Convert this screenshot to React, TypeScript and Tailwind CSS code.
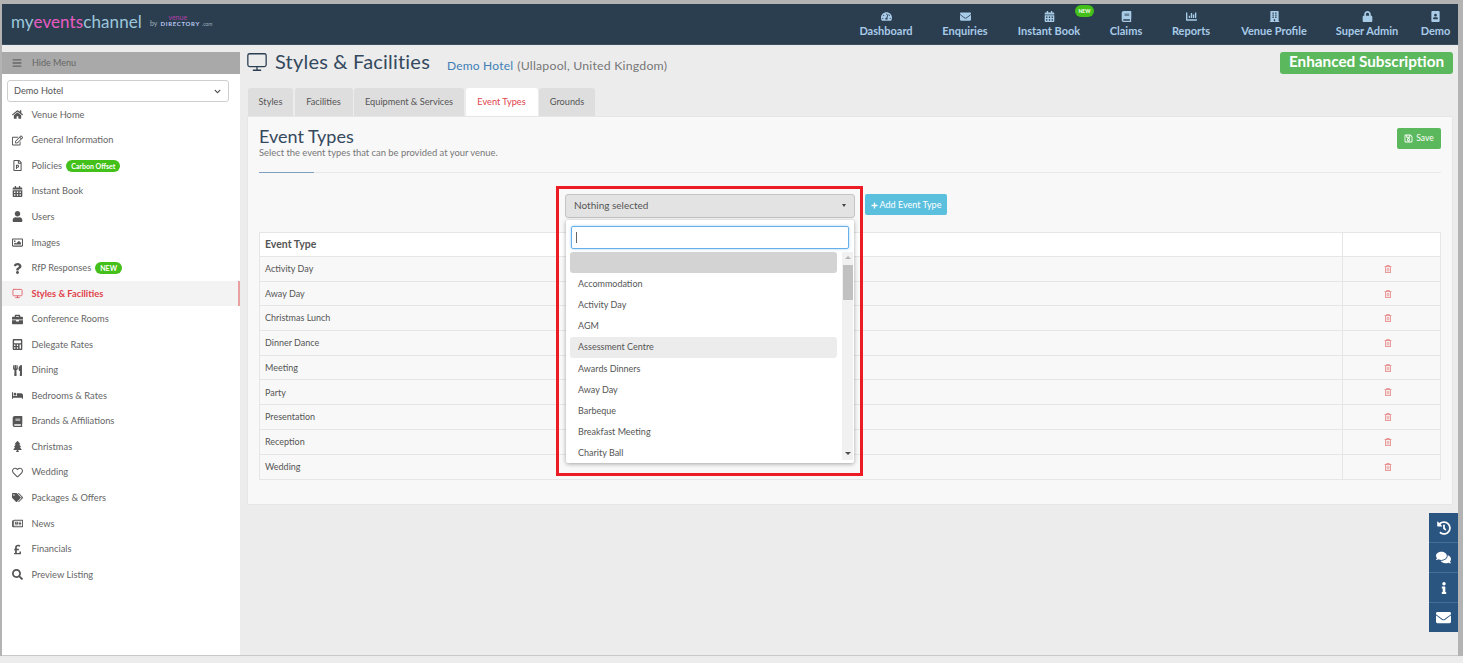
import { Monitor } from "lucide-react";
import {
  FaBars,
  FaBed,
  FaBook,
  FaBriefcase,
  FaBuilding,
  FaCalculator,
  FaCalendarAlt,
  FaChartBar,
  FaChevronDown,
  FaComments,
  FaEnvelope,
  FaHistory,
  FaHome,
  FaInfo,
  FaLock,
  FaPlus,
  FaPortrait,
  FaPoundSign,
  FaQuestion,
  FaRegEdit,
  FaRegFilePowerpoint,
  FaRegHeart,
  FaRegImage,
  FaRegNewspaper,
  FaRegSave,
  FaRegTrashAlt,
  FaSearch,
  FaTachometerAlt,
  FaTags,
  FaTree,
  FaUser,
  FaUtensils,
} from "react-icons/fa";

const navItems = [
  { label: "Dashboard", icon: FaTachometerAlt, width: "w-[86px]" },
  { label: "Enquiries", icon: FaEnvelope, width: "w-[72px]" },
  { label: "Instant Book", icon: FaCalendarAlt, width: "w-[96px]", isNew: true },
  { label: "Claims", icon: FaBook, width: "w-[58px]" },
  { label: "Reports", icon: FaChartBar, width: "w-[72px]" },
  { label: "Venue Profile", icon: FaBuilding, width: "w-[94px]" },
  { label: "Super Admin", icon: FaLock, width: "w-[92px]" },
  { label: "Demo", icon: FaPortrait, width: "w-[45px]" },
];

const menuItems = [
  { label: "Venue Home", icon: FaHome },
  { label: "General Information", icon: FaRegEdit },
  { label: "Policies", icon: FaRegFilePowerpoint, badge: "Carbon Offset" },
  { label: "Instant Book", icon: FaCalendarAlt },
  { label: "Users", icon: FaUser },
  { label: "Images", icon: FaRegImage },
  { label: "RfP Responses", icon: FaQuestion, badge: "NEW" },
  { label: "Styles & Facilities", icon: Monitor, active: true },
  { label: "Conference Rooms", icon: FaBriefcase },
  { label: "Delegate Rates", icon: FaCalculator },
  { label: "Dining", icon: FaUtensils },
  { label: "Bedrooms & Rates", icon: FaBed },
  { label: "Brands & Affiliations", icon: FaBook },
  { label: "Christmas", icon: FaTree },
  { label: "Wedding", icon: FaRegHeart },
  { label: "Packages & Offers", icon: FaTags },
  { label: "News", icon: FaRegNewspaper },
  { label: "Financials", icon: FaPoundSign },
  { label: "Preview Listing", icon: FaSearch },
];

const tabs = [
  { label: "Styles", width: "w-[45px]" },
  { label: "Facilities", width: "w-[58px]" },
  { label: "Equipment & Services", width: "w-[110px]" },
  { label: "Event Types", width: "w-[72px]", active: true },
  { label: "Grounds", width: "w-[56px]" },
];

const eventRows = [
  "Activity Day",
  "Away Day",
  "Christmas Lunch",
  "Dinner Dance",
  "Meeting",
  "Party",
  "Presentation",
  "Reception",
  "Wedding",
];

const options = [
  "Accommodation",
  "Activity Day",
  "AGM",
  "Assessment Centre",
  "Awards Dinners",
  "Away Day",
  "Barbeque",
  "Breakfast Meeting",
  "Charity Ball",
];

const Header = () => (
  <div className="h-[41px] shrink-0 bg-[#2b3e50] flex items-start justify-between border-b border-[#3c4f60] ml-[2px]">
    <div className="flex items-center pl-[9px] pt-[7px]">
      <span className="text-[17px] leading-[22px] tracking-[0.1px] text-[#9cc7dc]">
        my<span className="text-[#e85cc0]">events</span>channel
      </span>
      <span className="ml-[8px] mt-[3px] text-[7px] text-[#9fb0bd]">by</span>
      <div className="ml-[3px] flex flex-col items-start -mt-[2px]">
        <span className="text-[7px] leading-[6px] ml-[8px] text-[#b03fa8]">venue</span>
        <span className="text-[6px] leading-[8px] font-bold tracking-[0.7px] text-[#b9c6f0]">
          DIRECTORY <span className="font-normal text-[5px] text-[#9fb0bd] tracking-normal">.com</span>
        </span>
      </div>
    </div>
    <div className="flex">
      {navItems.map((item) => (
        <div
          key={item.label}
          className={`${item.width} relative flex flex-col items-center pt-[7px] text-[#a8cbe8]`}
        >
          <item.icon className="w-[11px] h-[11px] mb-[2px]" />
          <span className="text-[11px] leading-[14px] font-bold whitespace-nowrap">{item.label}</span>
          {item.isNew && (
            <span className="absolute top-[1px] right-[3px] w-[19px] h-[12px] rounded-full bg-[#43c01a] text-white text-[5px] font-bold leading-[12px] text-center">
              NEW
            </span>
          )}
        </div>
      ))}
    </div>
  </div>
);

const Sidebar = () => (
  <div className="w-[238px] shrink-0 bg-white mt-[7px] flex flex-col">
    <div className="h-[22px] bg-[#a9a9a9] flex items-center text-[#666] text-[9px]">
      <FaBars className="ml-[10px] w-[10px] h-[10px]" />
      <span className="ml-[10px]">Hide Menu</span>
    </div>
    <div className="ml-[5px] mr-[11px] mt-[6px] h-[22px] rounded-[3px] border border-[#cfcfcf] flex items-center justify-between pl-[6px] pr-[7px] text-[9.2px] text-[#555]">
      <span>Demo Hotel</span>
      <FaChevronDown className="w-[7px] h-[7px] text-[#444]" />
    </div>
    <div className="flex flex-col">
      {menuItems.map((item) => (
        <div
          key={item.label}
          className={`h-[25.55px] flex items-center text-[9.3px] ${
            item.active
              ? "bg-[#f3f3f3] border-r-2 border-[#e8a0a0] text-[#e0424a] font-bold"
              : "text-[#666]"
          }`}
        >
          <span className={`w-[29.5px] flex justify-center pl-[2px] ${item.active ? "text-[#e0666c]" : "text-[#555]"}`}>
            <item.icon className="w-[11px] h-[11px]" />
          </span>
          <span>{item.label}</span>
          {item.badge && (
            <span className="ml-[4px] h-[12px] px-[5px] rounded-full bg-[#43c01a] text-white text-[7px] font-bold leading-[12px]">
              {item.badge}
            </span>
          )}
        </div>
      ))}
    </div>
  </div>
);

const EventSelect = () => (
  <div className="relative w-[290px] h-[24px]">
    <div className="h-full rounded-[3px] bg-[#e3e3e3] border border-[#c4c4c4] flex items-center justify-between pl-[8px] pr-[8px] pb-[2px] text-[10px] text-[#555]">
      <span>Nothing selected</span>
      <span className="w-0 h-0 border-x-[2.5px] border-x-transparent border-t-[3px] border-t-[#444]" />
    </div>
    <div className="absolute left-[1px] top-[26px] w-[288px] h-[243px] bg-white shadow-[0_1px_4px_rgba(0,0,0,0.35)] rounded-[2px] pl-[4px] pt-[6px] z-10">
      <div className="ml-[1px] mr-[5px] h-[23px] rounded-[2px] border border-[#66afe9] shadow-[0_0_3px_rgba(102,175,233,0.6)] flex items-center pl-[4px]">
        <span className="w-px h-[11px] bg-[#666]" />
      </div>
      <div className="flex mt-[3px]">
        <div className="w-[267px] shrink-0 flex flex-col">
          <div className="h-[21px] rounded-[3px] bg-[#d3d3d3]" />
          {options.map((option) => (
            <div
              key={option}
              className={`h-[21.2px] shrink-0 pl-[8px] flex items-center rounded-[3px] text-[9px] text-[#555] ${
                option === "Assessment Centre" ? "bg-[#ececec]" : ""
              }`}
            >
              {option}
            </div>
          ))}
        </div>
        <div className="ml-[5px] w-[11px] shrink-0 h-[208px] bg-[#f1f1f1] flex flex-col items-center">
          <span className="mt-[4px] w-0 h-0 border-x-[3px] border-x-transparent border-b-[3px] border-b-[#b5b5b5]" />
          <span className="mt-[6px] w-[10px] h-[35px] bg-[#c1c1c1]" />
          <span className="mt-auto mb-[5px] w-0 h-0 border-x-[3px] border-x-transparent border-t-[3px] border-t-[#505050]" />
        </div>
      </div>
    </div>
    <div className="absolute left-[-9px] top-[-8px] w-[307px] h-[290px] border-[3px] border-[#ed1c24] z-20 pointer-events-none" />
  </div>
);

const Content = () => (
  <div className="flex-1 min-w-0 ml-[7px] mr-[5px] mt-[7px]">
    <div className="flex justify-between h-[36px]">
      <div className="flex items-start">
        <Monitor className="w-[22px] h-[22px] -ml-[1px] -mt-[1px] text-[#2b3e50]" strokeWidth={1.4} />
        <span className="ml-[7px] -mt-[2px] text-[20px] leading-[22px] tracking-[0.2px] text-[#34495e]">Styles &amp; Facilities</span>
        <span className="ml-[17px] mt-[6px] text-[12px] leading-[15px] tracking-[0.2px] text-[#3f7fb5]">Demo Hotel</span>
        <span className="ml-[4px] mt-[6px] text-[12.3px] leading-[15px] tracking-[0.2px] text-[#777]">(Ullapool, United Kingdom)</span>
      </div>
      <div className="w-[173px] h-[22px] rounded-[3px] bg-[#5cb85c] text-white text-[15.3px] font-bold leading-[19px] text-center">
        Enhanced Subscription
      </div>
    </div>
    <div className="flex gap-[1.5px] h-[28px] ml-[1px]">
      {tabs.map((tab) => (
        <div
          key={tab.label}
          className={`${tab.width} flex items-center justify-center rounded-t-[3px] text-[9.2px] ${
            tab.active ? "bg-white text-[#e0424a]" : "bg-[#dedede] text-[#555]"
          }`}
        >
          {tab.label}
        </div>
      ))}
    </div>
    <div className="h-[389px] bg-[#f8f8f8] border border-[#e6e6e6] px-[11px] pt-[11px]">
      <div className="flex justify-between">
        <div className="-mt-[1px]">
          <div className="text-[18px] leading-[19px] text-[#34495e]">Event Types</div>
          <div className="mt-[1px] text-[9.4px] leading-[11px] text-[#777]">Select the event types that can be provided at your venue.</div>
        </div>
        <div className="w-[44px] h-[21px] rounded-[2px] bg-[#5cb85c] text-white text-[8.5px] flex items-center justify-center gap-[3px]">
          <FaRegSave className="w-[9px] h-[9px]" />
          Save
        </div>
      </div>
      <div className="mt-[14px] h-px bg-[#e8e8e8]">
        <div className="w-[55px] h-px bg-[#7f9fc0]" />
      </div>
      <div className="flex mt-[21px] pl-[306px] gap-[10px]">
        <EventSelect />
        <div className="w-[82px] h-[21px] pt-[1px] rounded-[2px] bg-[#5bc0de] text-white text-[9px] flex items-center justify-center gap-[2px]">
          <FaPlus className="w-[7px] h-[7px]" />
          Add Event Type
        </div>
      </div>
      <div className="mt-[14px] border border-[#e6e6e6] text-[#555]">
        <div className="flex h-[24px] bg-white border-b border-[#e6e6e6] text-[10.5px] font-bold">
          <div className="flex-1 flex items-center px-[5px]">Event Type</div>
          <div className="w-[98px] border-l border-[#e6e6e6]" />
        </div>
        {eventRows.map((row) => (
          <div key={row} className="flex h-[24.7px] border-b border-[#e6e6e6] last:border-b-0 text-[9px]">
            <div className="flex-1 flex items-center px-[5px]">{row}</div>
            <div className="w-[98px] border-l border-[#e6e6e6] flex items-center justify-center pr-[8px]">
              <FaRegTrashAlt className="w-[8px] h-[8px] text-[#e57f7f]" />
            </div>
          </div>
        ))}
      </div>
    </div>
  </div>
);

const SideTabs = () => (
  <div className="absolute right-[5px] top-[513px] w-[29px] flex flex-col bg-[#2a5581] text-white">
    <div className="h-[30px] flex items-center justify-center border-b border-[#476f96]">
      <FaHistory className="w-[14px] h-[14px]" />
    </div>
    <div className="h-[30px] flex items-center justify-center border-b border-[#476f96]">
      <FaComments className="w-[15px] h-[15px]" />
    </div>
    <div className="h-[30px] flex items-center justify-center border-b border-[#476f96]">
      <FaInfo className="w-[12px] h-[12px]" />
    </div>
    <div className="h-[29px] flex items-center justify-center">
      <FaEnvelope className="w-[15px] h-[15px]" />
    </div>
  </div>
);

export default function App() {
  return (
    <div className="relative h-[663px] w-full overflow-hidden bg-[#b3b3b3] pt-[4px] font-['Lato',sans-serif]">
      <div className="mr-[5px]">
        <Header />
        <div className="ml-[2px] h-[611px] flex bg-[#ececec] border-b border-[#c8c8c8]">
          <Sidebar />
          <Content />
        </div>
      </div>
      <div className="h-[7px] bg-[#ececec]" />
      <SideTabs />
    </div>
  );
}
